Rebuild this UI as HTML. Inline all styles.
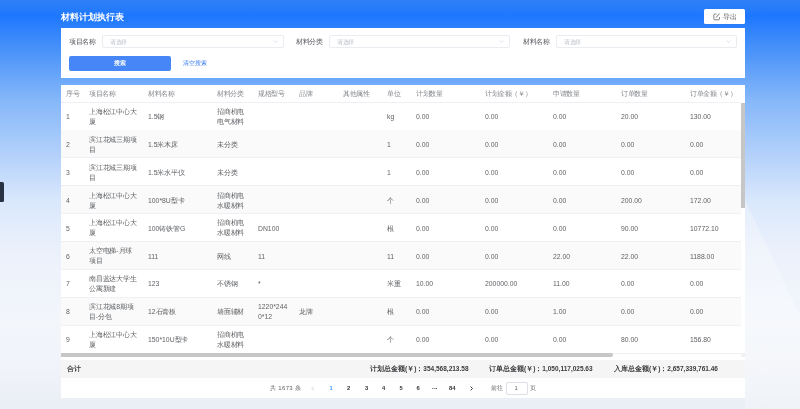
<!DOCTYPE html>
<html><head><meta charset="utf-8">
<style>
*{box-sizing:border-box;margin:0;padding:0}
html,body{width:800px;height:409px;overflow:hidden}
body{font-family:"Liberation Sans",sans-serif;position:relative;
background:linear-gradient(180deg,#2f80f7 0px,#1d77fe 16px,#3d8bfa 40px,#85b7f9 100px,#c0d8fb 170px,#d9e7fc 200px,#ebf1fb 250px,#f3f6fb 320px,#f0f3f9 370px,#eaeef5 409px);}
.abs{position:absolute}
.title{left:61px;top:10.8px;font-size:9px;font-weight:bold;color:#fff;line-height:12px;white-space:nowrap}
.export{left:704px;top:8.5px;width:41px;height:15.5px;background:#fff;border-radius:1.5px}
.export span{position:absolute;left:19px;top:3px;font-size:7px;line-height:9px;color:#606266}
.panel{left:61px;top:28px;width:684px;height:50px;background:#fff}
.lbl{transform:scale(.945);transform-origin:0 50%;font-size:7px;line-height:9px;color:#55575c;font-weight:500;white-space:nowrap}
.inp{height:13px;border:0.6px solid #eaecf1;border-radius:2px;background:#fff}
.inp span{position:absolute;left:7.2px;top:2.9px;font-size:6px;transform:scale(.945);transform-origin:0 50%;line-height:7px;color:#c0c4cc}
.inp svg{position:absolute;right:5.5px;top:4.1px}
.btn{left:69px;top:56.4px;width:101.5px;height:14.2px;background:#4786f6;border-radius:2px;color:#fff;font-size:5.8px;font-weight:bold;text-align:center;line-height:14.2px}
.link{left:183px;top:59px;font-size:6px;line-height:9px;color:#2f76f2;font-weight:500}
.tbl{left:61px;top:85px;width:684px;height:313px;background:#fff;overflow:hidden}
.row{position:absolute;left:0;width:680px;height:28px;border-bottom:0.6px solid #eef0f5}
.row.s{background:#fafafa}
.c{position:absolute;font-size:7px;line-height:10.25px;color:#606266;white-space:nowrap;transform:scale(.976);transform-origin:0 0}
.h .c{color:#87898e;top:4.1px;margin-left:0px;font-size:7px;transform:scale(.945);transform-origin:0 50%}
.sum .st{position:absolute;top:4.2px;font-size:6.5px;line-height:10px;color:#3a3b3e;font-weight:bold;white-space:nowrap}
.pg{position:absolute;top:298.2px;font-size:5.8px;line-height:10px;color:#606266;white-space:nowrap}
.pg.num{font-weight:bold;color:#303133}
.pg.act{color:#409eff}
.pg.arrow{color:#c0c4cc}
</style></head><body><div id="w" style="position:absolute;left:0;top:0;width:800px;height:409px;will-change:transform">
<svg class="abs" style="left:0;top:0" width="800" height="409"><polygon points="745,200 800,316 800,409 745,409" fill="#ffffff" fill-opacity="0.28"/></svg>
<div class="abs title">材料计划执行表</div>
<div class="abs export"><svg class="abs" style="left:8.5px;top:4.5px" width="7.5" height="7.5" viewBox="0 0 15 15"><path d="M7 2.2H3.6a2 2 0 0 0-2 2v7.4a2 2 0 0 0 2 2H11a2 2 0 0 0 2-2V8.2" fill="none" stroke="#5f6166" stroke-width="1.6"/><path d="M6.4 8.6L12.6 1.8" fill="none" stroke="#5f6166" stroke-width="1.8" stroke-linecap="round"/></svg><span>导出</span></div>

<div class="abs panel"></div>
<div class="abs lbl" style="left:69px;top:37px">项目名称</div>
<div class="abs inp" style="left:102px;top:35.4px;width:182px"><span>请选择</span><svg width="5" height="3" viewBox="0 0 10 6"><path d="M1 1l4 4 4-4" fill="none" stroke="#c0c4cc" stroke-width="1"/></svg></div>
<div class="abs lbl" style="left:296px;top:37px">材料分类</div>
<div class="abs inp" style="left:329px;top:35.4px;width:181px"><span>请选择</span><svg width="5" height="3" viewBox="0 0 10 6"><path d="M1 1l4 4 4-4" fill="none" stroke="#c0c4cc" stroke-width="1"/></svg></div>
<div class="abs lbl" style="left:523px;top:37px">材料名称</div>
<div class="abs inp" style="left:556px;top:35.4px;width:181px"><span>请选择</span><svg width="5" height="3" viewBox="0 0 10 6"><path d="M1 1l4 4 4-4" fill="none" stroke="#c0c4cc" stroke-width="1"/></svg></div>
<div class="abs btn">搜索</div>
<div class="abs link">清空搜索</div>

<div class="abs tbl">
<div class="row h" style="top:0;height:17.5px">
<div class="c" style="left:4.5px">序号</div>
<div class="c" style="left:28px">项目名称</div>
<div class="c" style="left:87px">材料名称</div>
<div class="c" style="left:155.5px">材料分类</div>
<div class="c" style="left:196.5px">规格型号</div>
<div class="c" style="left:237.5px">品牌</div>
<div class="c" style="left:281.5px">其他属性</div>
<div class="c" style="left:325.5px">单位</div>
<div class="c" style="left:355px">计划数量</div>
<div class="c" style="left:423.5px">计划金额（￥）</div>
<div class="c" style="left:492px">申请数量</div>
<div class="c" style="left:560px">订单数量</div>
<div class="c" style="left:628.5px">订单金额（￥）</div>
</div>
<div class="row" style="top:17.50px">
<div class="c" style="left:4.5px;top:9.5px">1</div>
<div class="c" style="left:28px;top:4.4px">上海松江中心大<br>厦</div>
<div class="c" style="left:87px;top:9.5px">1.5钢</div>
<div class="c" style="left:155.5px;top:4.4px">招商机电<br>电气材料</div>
<div class="c" style="left:325.5px;top:9.5px">kg</div>
<div class="c" style="left:355px;top:9.5px">0.00</div>
<div class="c" style="left:423.5px;top:9.5px">0.00</div>
<div class="c" style="left:492px;top:9.5px">0.00</div>
<div class="c" style="left:560px;top:9.5px">20.00</div>
<div class="c" style="left:628.5px;top:9.5px">130.00</div>
</div>
<div class="row s" style="top:45.40px">
<div class="c" style="left:4.5px;top:9.5px">2</div>
<div class="c" style="left:28px;top:4.4px">滨江花城三期项<br>目</div>
<div class="c" style="left:87px;top:9.5px">1.5米木床</div>
<div class="c" style="left:155.5px;top:9.5px">未分类</div>
<div class="c" style="left:325.5px;top:9.5px">1</div>
<div class="c" style="left:355px;top:9.5px">0.00</div>
<div class="c" style="left:423.5px;top:9.5px">0.00</div>
<div class="c" style="left:492px;top:9.5px">0.00</div>
<div class="c" style="left:560px;top:9.5px">0.00</div>
<div class="c" style="left:628.5px;top:9.5px">0.00</div>
</div>
<div class="row" style="top:73.30px">
<div class="c" style="left:4.5px;top:9.5px">3</div>
<div class="c" style="left:28px;top:4.4px">滨江花城三期项<br>目</div>
<div class="c" style="left:87px;top:9.5px">1.5米水平仪</div>
<div class="c" style="left:155.5px;top:9.5px">未分类</div>
<div class="c" style="left:325.5px;top:9.5px">1</div>
<div class="c" style="left:355px;top:9.5px">0.00</div>
<div class="c" style="left:423.5px;top:9.5px">0.00</div>
<div class="c" style="left:492px;top:9.5px">0.00</div>
<div class="c" style="left:560px;top:9.5px">0.00</div>
<div class="c" style="left:628.5px;top:9.5px">0.00</div>
</div>
<div class="row s" style="top:101.20px">
<div class="c" style="left:4.5px;top:9.5px">4</div>
<div class="c" style="left:28px;top:4.4px">上海松江中心大<br>厦</div>
<div class="c" style="left:87px;top:9.5px">100*8U型卡</div>
<div class="c" style="left:155.5px;top:4.4px">招商机电<br>水暖材料</div>
<div class="c" style="left:325.5px;top:9.5px">个</div>
<div class="c" style="left:355px;top:9.5px">0.00</div>
<div class="c" style="left:423.5px;top:9.5px">0.00</div>
<div class="c" style="left:492px;top:9.5px">0.00</div>
<div class="c" style="left:560px;top:9.5px">200.00</div>
<div class="c" style="left:628.5px;top:9.5px">172.00</div>
</div>
<div class="row" style="top:129.10px">
<div class="c" style="left:4.5px;top:9.5px">5</div>
<div class="c" style="left:28px;top:4.4px">上海松江中心大<br>厦</div>
<div class="c" style="left:87px;top:9.5px">100铸铁管G</div>
<div class="c" style="left:155.5px;top:4.4px">招商机电<br>水暖材料</div>
<div class="c" style="left:196.5px;top:9.5px">DN100</div>
<div class="c" style="left:325.5px;top:9.5px">根</div>
<div class="c" style="left:355px;top:9.5px">0.00</div>
<div class="c" style="left:423.5px;top:9.5px">0.00</div>
<div class="c" style="left:492px;top:9.5px">0.00</div>
<div class="c" style="left:560px;top:9.5px">90.00</div>
<div class="c" style="left:628.5px;top:9.5px">10772.10</div>
</div>
<div class="row s" style="top:157.00px">
<div class="c" style="left:4.5px;top:9.5px">6</div>
<div class="c" style="left:28px;top:4.4px">太空电梯-月球<br>项目</div>
<div class="c" style="left:87px;top:9.5px">111</div>
<div class="c" style="left:155.5px;top:9.5px">网线</div>
<div class="c" style="left:196.5px;top:9.5px">11</div>
<div class="c" style="left:325.5px;top:9.5px">11</div>
<div class="c" style="left:355px;top:9.5px">0.00</div>
<div class="c" style="left:423.5px;top:9.5px">0.00</div>
<div class="c" style="left:492px;top:9.5px">22.00</div>
<div class="c" style="left:560px;top:9.5px">22.00</div>
<div class="c" style="left:628.5px;top:9.5px">1188.00</div>
</div>
<div class="row" style="top:184.90px">
<div class="c" style="left:4.5px;top:9.5px">7</div>
<div class="c" style="left:28px;top:4.4px">南昌蓝达大学生<br>公寓新建</div>
<div class="c" style="left:87px;top:9.5px">123</div>
<div class="c" style="left:155.5px;top:9.5px">不锈钢</div>
<div class="c" style="left:196.5px;top:9.5px">*</div>
<div class="c" style="left:325.5px;top:9.5px">米重</div>
<div class="c" style="left:355px;top:9.5px">10.00</div>
<div class="c" style="left:423.5px;top:9.5px">200000.00</div>
<div class="c" style="left:492px;top:9.5px">11.00</div>
<div class="c" style="left:560px;top:9.5px">0.00</div>
<div class="c" style="left:628.5px;top:9.5px">0.00</div>
</div>
<div class="row s" style="top:212.80px">
<div class="c" style="left:4.5px;top:9.5px">8</div>
<div class="c" style="left:28px;top:4.4px">滨江花城8期项<br>目-分包</div>
<div class="c" style="left:87px;top:9.5px">12石膏板</div>
<div class="c" style="left:155.5px;top:9.5px">墙面辅材</div>
<div class="c" style="left:196.5px;top:4.4px">1220*244<br>0*12</div>
<div class="c" style="left:237.5px;top:9.5px">龙牌</div>
<div class="c" style="left:325.5px;top:9.5px">根</div>
<div class="c" style="left:355px;top:9.5px">0.00</div>
<div class="c" style="left:423.5px;top:9.5px">0.00</div>
<div class="c" style="left:492px;top:9.5px">1.00</div>
<div class="c" style="left:560px;top:9.5px">0.00</div>
<div class="c" style="left:628.5px;top:9.5px">0.00</div>
</div>
<div class="row" style="top:240.70px">
<div class="c" style="left:4.5px;top:9.5px">9</div>
<div class="c" style="left:28px;top:4.4px">上海松江中心大<br>厦</div>
<div class="c" style="left:87px;top:9.5px">150*10U型卡</div>
<div class="c" style="left:155.5px;top:4.4px">招商机电<br>水暖材料</div>
<div class="c" style="left:325.5px;top:9.5px">个</div>
<div class="c" style="left:355px;top:9.5px">0.00</div>
<div class="c" style="left:423.5px;top:9.5px">0.00</div>
<div class="c" style="left:492px;top:9.5px">0.00</div>
<div class="c" style="left:560px;top:9.5px">80.00</div>
<div class="c" style="left:628.5px;top:9.5px">156.80</div>
</div>
<div class="abs" style="left:680px;top:18px;width:4px;height:105px;background:#c6c6c6"></div>
<div class="abs" style="left:0;top:267.5px;width:551.5px;height:4.5px;background:#c6c6c6;border-radius:0 2.2px 2.2px 0"></div>
<div class="abs" style="left:680px;top:267.5px;width:4px;height:4.5px;background:#f1f1f1"></div>
<div class="abs sum" style="left:0;top:275px;width:684px;height:18px;background:#f5f5f5">
<div class="st" style="left:5.6px;font-weight:bold">合计</div>
<div class="st" style="left:309px">计划总金额(￥)：354,568,213.58</div>
<div class="st" style="left:428px">订单总金额(￥)：1,050,117,025.63</div>
<div class="st" style="left:553px">入库总金额(￥)：2,657,339,761.46</div>
</div>
<div class="pg" style="left:208.7px;font-size:6px;letter-spacing:0.4px">共 1673 条</div>
<svg class="abs" style="left:249.7px;top:300.5px" width="3.4" height="5" viewBox="0 0 6.8 10"><path d="M5.6 1.2L1.8 5l3.8 3.8" fill="none" stroke="#c0c4cc" stroke-width="1.7"/></svg>
<div class="pg num act" style="left:268.5px">1</div>
<div class="pg num" style="left:286px">2</div>
<div class="pg num" style="left:304px">3</div>
<div class="pg num" style="left:321px">4</div>
<div class="pg num" style="left:338.5px">5</div>
<div class="pg num" style="left:355.5px">6</div>
<div class="pg num" style="left:371px">···</div>
<div class="pg num" style="left:388px">84</div>
<svg class="abs" style="left:409px;top:300.6px" width="3.4" height="5" viewBox="0 0 6.8 10"><path d="M1.2 1.2L5 5l-3.8 3.8" fill="none" stroke="#303133" stroke-width="1.8"/></svg>
<div class="pg" style="left:430px">前往</div>
<div class="abs" style="left:444.5px;top:296.5px;width:22px;height:13px;border:0.6px solid #dcdfe6;border-radius:2px"></div>
<div class="pg" style="left:453.5px">1</div>
<div class="pg" style="left:469px">页</div>
</div>
<div class="abs" style="left:0;top:182.3px;width:4.2px;height:19.5px;background:#283243;border-radius:0 1.5px 1.5px 0"></div>
</div></body></html>
